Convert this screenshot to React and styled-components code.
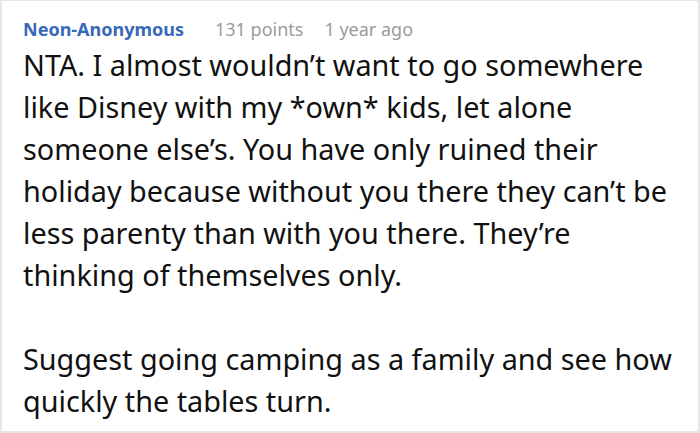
import React from 'react';
import styled, { createGlobalStyle } from 'styled-components';

const Global = createGlobalStyle`
  html, body {
    margin: 0;
    padding: 0;
    background: #ffffff;
  }
`;

const Card = styled.div`
  box-sizing: border-box;
  width: 700px;
  height: 433px;
  border: 2px solid #e6e6e6;
  border-top-width: 1px;
  background: #fff;
  padding: 13px 22px 0 21px;
  font-family: "Noto Sans", "Open Sans", sans-serif;
  overflow: hidden;
`;

const Meta = styled.div`
  display: flex;
  align-items: baseline;
  font-size: 18px;
  line-height: 30px;
`;

const Author = styled.span`
  color: #3869b8;
  font-weight: 700;
`;

const Info = styled.span`
  color: #9b9b9b;
  margin-left: ${p => p.space}px;
`;

const Body = styled.div`
  color: #111;
  font-size: 28.8px;
  line-height: 42px;
`;

const Para = styled.p`
  margin: 0 0 ${p => p.gap || 0}px;
`;

export default function App() {
  return (
    <>
      <Global />
      <Card>
        <Meta>
          <Author>Neon-Anonymous</Author>
          <Info space={31}>131 points</Info>
          <Info space={21}>1 year ago</Info>
        </Meta>
        <Body>
          <Para gap={42}>
            NTA. I almost wouldn’t want to go somewhere like Disney with my *own* kids, let alone
            someone else’s. You have only ruined their holiday because without you there they can’t be
            less parenty than with you there. They’re thinking of themselves only.
          </Para>
          <Para>Suggest going camping as a family and see how quickly the tables turn.</Para>
        </Body>
      </Card>
    </>
  );
}
